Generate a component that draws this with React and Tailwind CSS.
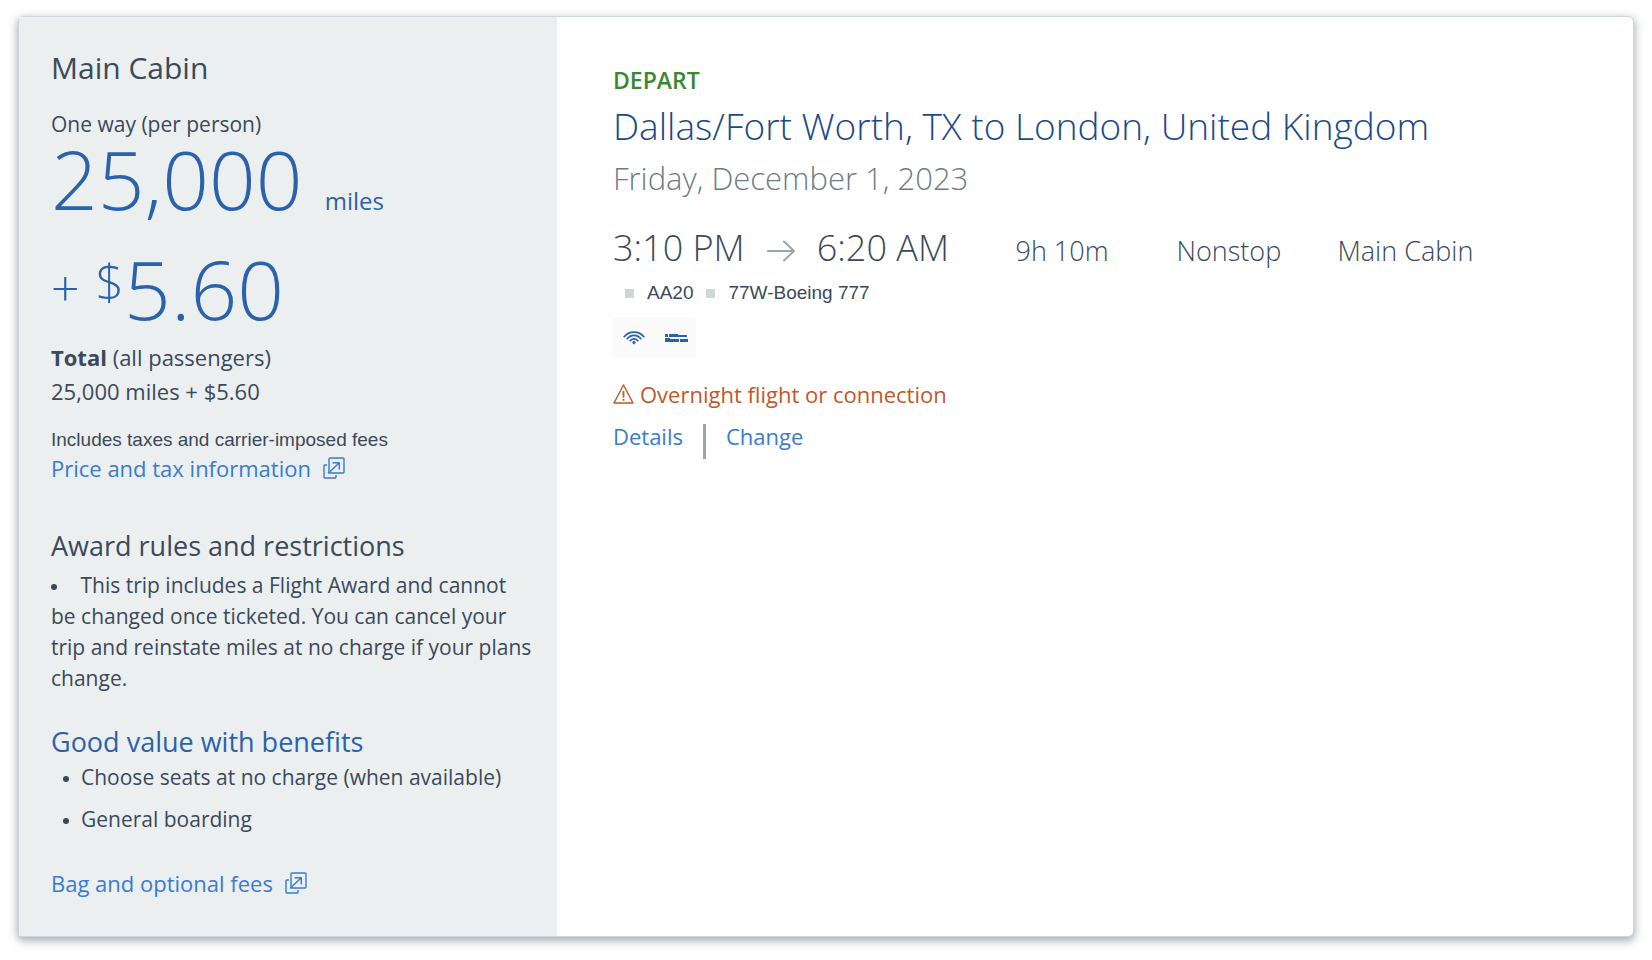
import React from 'react';

const benefits = ['Choose seats at no charge (when available)', 'General boarding'];

const NewWindowIcon = () => (
    <svg className="h-[22px] w-[22px] shrink-0" viewBox="0 0 22 22" fill="none" stroke="currentColor" strokeWidth="1.4" strokeLinejoin="round" aria-hidden="true">
        <rect x="6" y="1" width="15" height="15" rx="1" />
        <path d="M4 8H1.8a1 1 0 0 0-.8.8v11.4a1 1 0 0 0 .8.8h10.4a1 1 0 0 0 .8-.8V18" />
        <path d="M5 16.6L16 6M9.5 5.7h6.8v6.8" />
    </svg>
);

const ArrowIcon = () => (
    <svg className="mt-1.5 h-[22px] w-[28px]" viewBox="0 0 28 22" fill="none" stroke="#9da6ab" strokeWidth="2" strokeLinecap="round" strokeLinejoin="round" aria-hidden="true">
        <path d="M1 11h26M17 1.500L27 11l-10 9.500" />
    </svg>
);

const WifiIcon = () => (
    <svg className="h-[14px] w-[22px]" viewBox="0 0 22 14" fill="none" stroke="#2a62ab" strokeWidth="1.6" role="img" aria-label="Wi-Fi">
        <path d="M.7 6.300C6.200-.6 15.800-.6 21.300 6.300" />
        <path d="M3.700 8.300C7.600 3 14.400 3 18.300 8.300" />
        <path d="M6.700 10.300C9 7.100 13 7.100 15.300 10.300" />
        <path d="M11 9.600l2 2-2 2-2-2z" fill="#2a62ab" stroke="none" />
    </svg>
);

const LieFlatIcon = () => (
    <svg className="h-[8px] w-[23px]" viewBox="0 0 23 8" fill="#2a62ab" role="img" aria-label="Lie-flat seat">
        <path d="M0 0h3v3H0zM4 0h9v1h9v2H4zM0 4h5v1h9v3H0zM15 5h8v3h-8z" />
    </svg>
);

const WarningIcon = () => (
    <svg className="h-5 w-[21px]" viewBox="0 0 21 20" fill="none" stroke="currentColor" strokeWidth="1.4" strokeLinejoin="round" aria-hidden="true">
        <path d="M10.500 1L20 19H1z" />
        <path d="M10.500 7v6.500M10.500 15v1.700" strokeWidth="1.8" />
    </svg>
);

const Bullet = () => <span className="inline-block h-1.5 w-1.5 rounded-full bg-current align-middle" />;

const FareSummary = () => (
    <aside className="w-1/3 bg-[#ebeff0] pt-[31px] pr-[22px] pb-[37px] pl-8">
        <h2 className="text-[30px] leading-10">Main Cabin</h2>
        <p className="mt-[22px] text-[21px] leading-7">One way (per person)</p>
        <p className="mt-2.5 flex items-baseline gap-[22px] text-[#2a62ab]">
            <span className="text-[82px] leading-[60px] font-light">25,000</span>
            <span className="text-2xl leading-3">miles</span>
        </p>
        <p className="mt-[50px] flex items-start font-light text-[#2a62ab]">
            <span className="mr-4 text-[50px] leading-[60px]">+</span>
            <span className="text-[50px] leading-[46px]">$</span>
            <span className="text-[82px] leading-[60px]">5.60</span>
        </p>
        <div className="mt-[22px] text-[22px] leading-[34px]">
            <p><strong>Total</strong> (all passengers)</p>
            <p>25,000 miles + $5.60</p>
        </div>
        <p className="mt-5 font-['Liberation_Sans',sans-serif] text-[19px] leading-6">
            Includes taxes and carrier-imposed fees
        </p>
        <a href="#price" className="flex items-center gap-3 text-[22px] leading-8 text-[#3a7bd0]">
            Price and tax information
            <NewWindowIcon />
        </a>

        <h3 className="mt-11 text-[27px] leading-9">Award rules and restrictions</h3>
        <p className="mt-1.5 text-[21px] leading-[31px]">
            <span className="mr-[18px]"><Bullet /></span>{' '}
            This trip includes a Flight Award and cannot be changed once ticketed. You can cancel your
            trip and reinstate miles at no charge if your plans change.
        </p>

        <h3 className="mt-[30px] text-[27px] leading-9 text-[#2a62ab]">Good value with benefits</h3>
        <ul className="mt-0.5 space-y-[11px] text-[21px] leading-[31px]">
            {benefits.map((benefit) => (
                <li key={benefit} className="flex gap-3 pl-3">
                    <span><Bullet /></span>
                    {benefit}
                </li>
            ))}
        </ul>
        <a href="#bags" className="mt-8 flex items-center gap-3 text-[22px] leading-8 text-[#3a7bd0]">
            Bag and optional fees
            <NewWindowIcon />
        </a>
    </aside>
);

const FlightDetails = () => (
    <section className="flex-1 pt-[47px] pr-[54px] pl-14">
        <p className="text-[23px] leading-8 font-semibold text-[#3d8730]">DEPART</p>
        <h1 className="mt-1.5 text-[37px] leading-[48px] font-light text-[#1b4a87]">
            Dallas/Fort Worth, TX to London, United Kingdom
        </h1>
        <p className="mt-1.5 text-[31px] leading-[44px] font-light text-[#6f7c87]">Friday, December 1, 2023</p>

        <div className="mt-[22px] grid grid-cols-[5fr_2fr_2fr_3fr] items-baseline text-[27px] leading-[52px] font-light">
            <div className="flex items-center gap-[22px] text-[36px]">
                <span>3:10 PM</span>
                <ArrowIcon />
                <span>6:20 AM</span>
            </div>
            <span>9h 10m</span>
            <span>Nonstop</span>
            <span>Main Cabin</span>
        </div>

        <div className="mt-1 flex items-center gap-[13px] pl-3 font-['Liberation_Sans',sans-serif] text-[19px] leading-6">
            <span className="h-[9px] w-[9px] bg-[#d0d7db]" />
            <span>AA20</span>
            <span className="h-[9px] w-[9px] bg-[#d0d7db]" />
            <span>77W-Boeing 777</span>
        </div>

        <div className="mt-3 flex h-[41px] w-fit items-center gap-5 rounded bg-[#fafafa] pr-2 pl-2.5">
            <WifiIcon />
            <LieFlatIcon />
        </div>

        <p className="mt-5 flex items-center gap-1.5 text-[22px] leading-8 text-[#c4562a]">
            <WarningIcon />
            Overnight flight or connection
        </p>

        <div className="mt-2.5 flex items-start text-[22px] leading-8 text-[#3a7bd0]">
            <button type="button">Details</button>
            <span className="mx-5 mt-1 h-[35px] w-[3px] bg-[#9da6ab]" />
            <button type="button">Change</button>
        </div>
    </section>
);

const App = () => {
    return (
        <main className="bg-white px-[18px] pt-4 pb-6 font-['Open_Sans','Noto_Sans',sans-serif] text-[#3b495a]">
            <div className="flex rounded-md border border-[#ced5dc] bg-white shadow-[0_3px_8px_1px_rgba(80,96,115,0.5)]">
                <FareSummary />
                <FlightDetails />
            </div>
        </main>
    );
};

export default App;
